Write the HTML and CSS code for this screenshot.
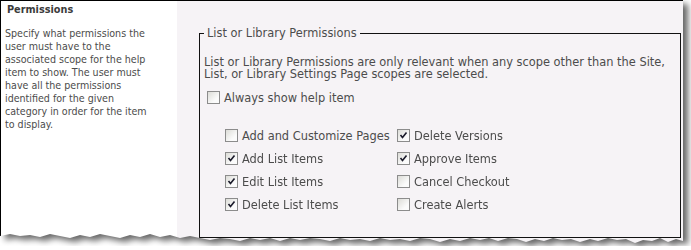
FILE: index.html
```html
<!DOCTYPE html>
<html lang="en">
<head>
    <meta charset="UTF-8">
    <title>Help Item Permissions</title>
    <link rel="stylesheet" href="styles.css">
</head>
<body>
    <div class="shot">
        <div class="frame">
            <div class="desc">
                <h3>Permissions</h3>
                <p>Specify what permissions the<br>user must have to the<br>associated scope for the help<br>item to show. The user must<br>have all the permissions<br>identified for the given<br>category in order for the item<br>to display.</p>
            </div>
            <div class="controls">
                <fieldset>
                    <legend>List or Library Permissions</legend>
                    <p>List or Library Permissions are only relevant when any scope other than the Site, List, or Library Settings Page scopes are selected.</p>
                    <label class="check always"><span class="box"></span>Always show help item</label>
                    <div class="perms">
                        <label class="check"><span class="box"></span>Add and Customize Pages</label>
                        <label class="check"><span class="box on"><svg viewBox="0 0 11 11"><path d="M2.5 5 L4.5 7.5 L8.5 2.5"/></svg></span>Delete Versions</label>
                        <label class="check"><span class="box on"><svg viewBox="0 0 11 11"><path d="M2.5 5 L4.5 7.5 L8.5 2.5"/></svg></span>Add List Items</label>
                        <label class="check"><span class="box on"><svg viewBox="0 0 11 11"><path d="M2.5 5 L4.5 7.5 L8.5 2.5"/></svg></span>Approve Items</label>
                        <label class="check"><span class="box on"><svg viewBox="0 0 11 11"><path d="M2.5 5 L4.5 7.5 L8.5 2.5"/></svg></span>Edit List Items</label>
                        <label class="check"><span class="box"></span>Cancel Checkout</label>
                        <label class="check"><span class="box on"><svg viewBox="0 0 11 11"><path d="M2.5 5 L4.5 7.5 L8.5 2.5"/></svg></span>Delete List Items</label>
                        <label class="check"><span class="box"></span>Create Alerts</label>
                    </div>
                </fieldset>
            </div>
        </div>
    </div>
</body>
</html>
```

FILE: styles.css
```css
body {
    margin: 0;
    background: #fff;
    color: #4c4c4c;
    font-family: "DejaVu Sans", Verdana, sans-serif;
}
.shot {
    width: 684px;
    filter: drop-shadow(5px 4px 3px rgba(0,0,0,0.6));
}
.frame {
    display: flex;
    width: 683px;
    height: 246px;
    border-top: 1px solid #000;
    border-left: 1px solid #000;
    box-sizing: border-box;
    clip-path: polygon(0 0, 683px 0, 683px 241px, 676px 239px, 668px 242px, 660px 238px, 652px 241px, 643px 240px, 635px 243px, 626px 239px, 617px 240px, 608px 238px, 598px 241px, 590px 239px, 580px 242px, 571px 239px, 562px 240px, 553px 238px, 544px 241px, 535px 239px, 526px 242px, 517px 239px, 508px 238px, 498px 241px, 489px 238px, 480px 240px, 470px 238px, 460px 241px, 450px 239px, 440px 242px, 430px 239px, 420px 238px, 410px 241px, 400px 239px, 390px 240px, 380px 238px, 370px 241px, 360px 239px, 350px 240px, 340px 238px, 330px 241px, 320px 239px, 310px 238px, 300px 240px, 290px 238px, 280px 241px, 270px 238px, 260px 240px, 250px 238px, 240px 241px, 230px 239px, 220px 238px, 210px 240px, 200px 238px, 190px 236px, 180px 238px, 170px 235px, 160px 237px, 150px 234px, 140px 237px, 130px 235px, 120px 238px, 110px 236px, 100px 234px, 90px 237px, 80px 235px, 70px 238px, 60px 236px, 50px 234px, 40px 237px, 30px 235px, 20px 236px, 10px 234px, 0 236px);
}
.desc {
    width: 176px;
    flex: none;
    background: #fff;
    padding: 2px 4px 0 4px;
    box-sizing: border-box;
    font-family: "DejaVu Sans Condensed", "DejaVu Sans", sans-serif;
    font-stretch: condensed;
    font-size: 10.6px;
    line-height: 13px;
    white-space: nowrap;
}
.desc h3 {
    margin: 0 0 0 2px;
    font-size: 10.8px;
    line-height: 13px;
    font-weight: bold;
    color: #3b3b3b;
}
.desc p {
    margin: 11px 0 0 0;
}
.controls {
    flex: 1;
    background: #f6f3f6;
    padding: 26px 2px 0 22px;
    font-size: 11.4px;
}
fieldset {
    margin: 0;
    min-width: 0;
    border: 1px solid #111;
    padding: 0 4px 21px 4px;
}
legend {
    padding: 0 3px;
    line-height: 13px;
}
fieldset p {
    margin: 16px 0 0 0;
    line-height: 12px;
}
.check {
    display: flex;
    align-items: center;
    gap: 4px;
    height: 23px;
    white-space: nowrap;
}
.always {
    margin: 6px 0 0 3px;
}
.perms {
    display: grid;
    grid-template-columns: 172px 1fr;
    margin: 15px 0 0 21px;
}
.box {
    width: 11px;
    height: 11px;
    border: 1px solid #8c8c8c;
    background: linear-gradient(135deg, #dcdcd7, #fbfbfb 70%);
    flex: none;
}
.box svg {
    display: block;
    width: 11px;
    height: 11px;
}
.box svg path {
    fill: none;
    stroke: #1a1a2a;
    stroke-width: 1.6;
}
```
